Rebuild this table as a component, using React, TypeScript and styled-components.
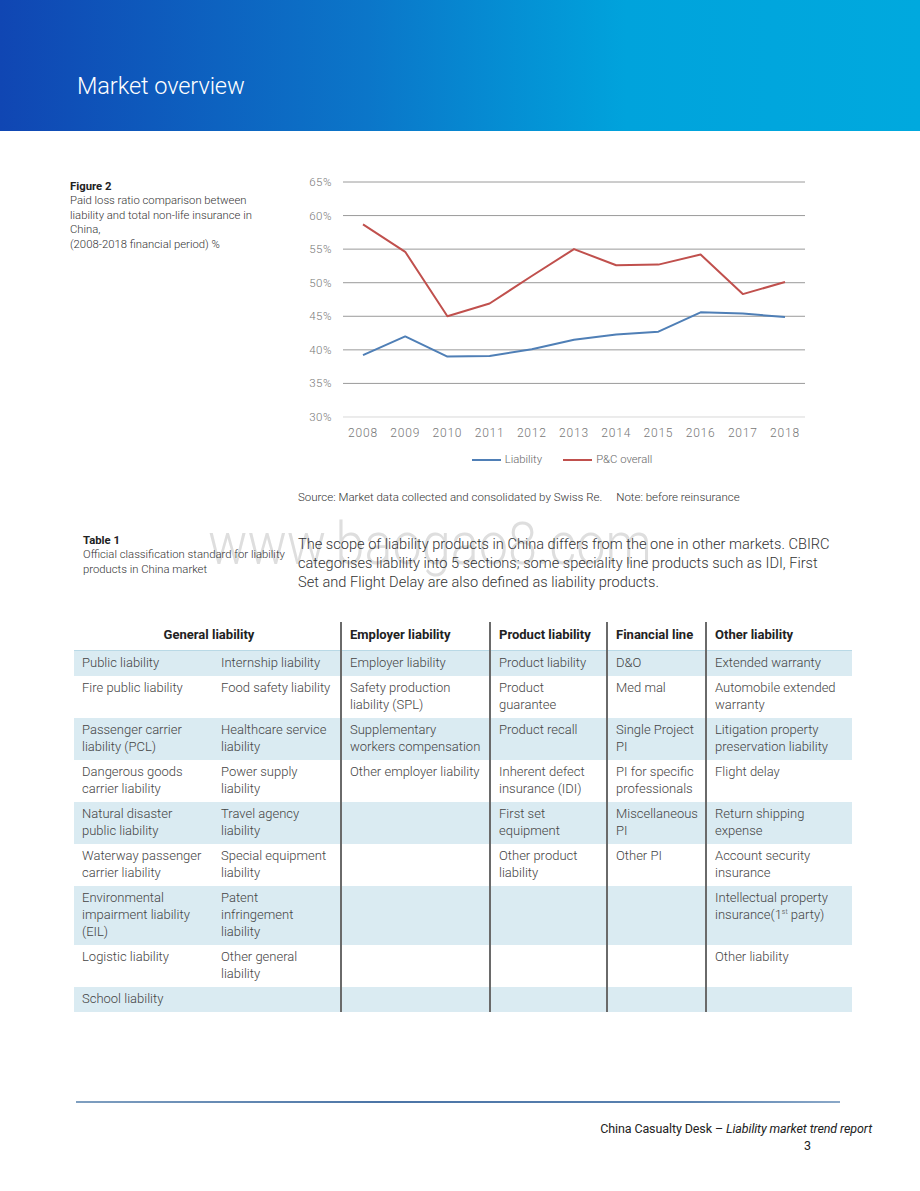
import React from "react";
import styled, { createGlobalStyle } from "styled-components";

const Global = createGlobalStyle`
  html, body { margin: 0; padding: 0; background: #fff; }
  body { font-family: Roboto, "Liberation Sans", Arial, sans-serif; color: #333; }
  * { box-sizing: border-box; }
`;

const Page = styled.div`
  position: relative;
  width: 920px;
  min-height: 1191px;
  display: flex;
  flex-direction: column;
`;

const Header = styled.header`
  height: 131px;
  background: linear-gradient(90deg, #1046b3 0%, #0b76c9 40%, #00a3dc 68%, #00a9de 100%);
  display: flex;
  align-items: flex-end;
  padding: 0 0 31px 77px;
`;

const Title = styled.h1`
  margin: 0;
  font-family: Roboto, "Liberation Sans", sans-serif;
  font-weight: 300;
  font-size: 23.6px;
  color: #fff;
  letter-spacing: -0.1px;
`;

const FigureSection = styled.section`
  display: flex;
  padding: 49px 0 0 70px;
`;

const Caption = styled.div<{ $w: number }>`
  width: ${(p) => p.$w}px;
  flex: none;
  font-size: 11.3px;
  line-height: 14.4px;
  color: #333;
  font-weight: 300;
`;

const CaptionTitle = styled.div`
  font-weight: 700;
  font-size: 11.3px;
  color: #222;
`;

const ChartCol = styled.div`
  width: 530px;
  display: flex;
  flex-direction: column;
  margin-top: -9px;
`;

const Legend = styled.div`
  display: flex;
  justify-content: center;
  gap: 21px;
  padding-left: 14px;
  margin-top: 10px;
  font-size: 11.3px;
  color: #666;
  font-weight: 300;
`;

const LegendItem = styled.div`
  display: flex;
  align-items: center;
  gap: 4px;
`;

const Swatch = styled.span<{ $c: string }>`
  width: 29px;
  height: 2px;
  background: ${(p) => p.$c};
`;

const Source = styled.div`
  margin-top: 24px;
  padding-left: 8px;
  font-size: 11.5px;
  font-weight: 300;
  color: #333;
`;

const NoteGap = styled.span`
  display: inline-block;
  width: 14px;
`;

const TableIntro = styled.section`
  position: relative;
  display: flex;
  padding: 24px 0 0 83px;
`;

const Watermark = styled.div`
  position: absolute;
  left: 208px;
  top: 4px;
  font-size: 60px;
  font-weight: 300;
  color: #dedede;
  white-space: nowrap;
  transform: scaleX(0.87);
  transform-origin: left center;
  pointer-events: none;
  z-index: 0;
`;

const IntroCaption = styled(Caption)`
  position: relative;
  z-index: 1;
  margin-top: 6px;
`;

const Para = styled.p`
  position: relative;
  z-index: 1;
  margin: 7px 0 0 0;
  width: 533px;
  font-size: 14.6px;
  line-height: 19px;
  font-weight: 300;
  color: #333;
`;

const TableWrap = styled.div`
  padding: 30px 0 0 74px;
`;

const Table = styled.table`
  border-collapse: collapse;
  width: 778px;
  table-layout: fixed;
  font-size: 13px;
  font-weight: 300;
  color: #444;
`;

const Th = styled.th<{ $sep?: boolean; $center?: boolean }>`
  font-weight: 700;
  font-size: 13px;
  color: #222;
  text-align: ${(p) => (p.$center ? "center" : "left")};
  padding: 4px 4px 6px 8px;
  height: 28px;
  white-space: nowrap;
  border-left: ${(p) => (p.$sep ? "2px solid #6a6a6a" : "none")};
  border-bottom: 1px solid #b9d9e6;
`;

const Tr = styled.tr<{ $band: boolean }>`
  background: ${(p) => (p.$band ? "#daebf2" : "#fff")};
`;

const Td = styled.td<{ $sep?: boolean }>`
  vertical-align: top;
  padding: 3px 4px 5px 8px;
  line-height: 17px;
  white-space: pre;
  border-left: ${(p) => (p.$sep ? "2px solid #6a6a6a" : "none")};
`;

const Sup = styled.sup`
  font-size: 7px;
  vertical-align: 5px;
  line-height: 0;
`;

const Footer = styled.footer`
  margin-top: auto;
  padding: 0 0 37px 0;
  display: flex;
  flex-direction: column;
`;

const FootLine = styled.div`
  margin-left: 76px;
  width: 764px;
  height: 2px;
  background: linear-gradient(90deg, #7f9fc0, #4b74a6 40%, #5a82b0 80%, #8aa8c8);
`;

const FootText = styled.div`
  align-self: flex-end;
  margin-right: 48px;
  margin-top: 17px;
  font-size: 12.5px;
  color: #222;
  font-weight: 400;
  text-align: right;
  line-height: 17px;
  letter-spacing: -0.1px;
`;

const PageNum = styled.div`
  padding-right: 61px;
`;

const years = [2008, 2009, 2010, 2011, 2012, 2013, 2014, 2015, 2016, 2017, 2018];
const pc = [58.7, 54.6, 45.0, 46.9, 51.0, 55.0, 52.6, 52.7, 54.2, 48.3, 50.1];
const liab = [39.2, 42.0, 39.0, 39.1, 40.1, 41.5, 42.3, 42.7, 45.6, 45.4, 44.9];

const yOf = (v: number) => 11 + (65 - v) * 6.714;
const xOf = (i: number) => 73 + i * 42.2;

const Chart: React.FC = () => {
  const ticks = [65, 60, 55, 50, 45, 40, 35, 30];
  const pts = (d: number[]) => d.map((v, i) => `${xOf(i).toFixed(1)},${yOf(v).toFixed(1)}`).join(" ");
  return (
    <svg width={530} height={272} viewBox="0 0 530 272">
      {ticks.map((t) => (
        <g key={t}>
          <line x1={53} x2={515} y1={yOf(t)} y2={yOf(t)} stroke={t === 30 ? "#d9d9d9" : "#9a9a9a"} strokeWidth={1} />
          <text x={42} y={yOf(t) + 4} textAnchor="end" fontSize={11.5} fill="#777" fontFamily="Roboto, sans-serif" fontWeight={300} letterSpacing={0.5}>
            {t}%
          </text>
        </g>
      ))}
      {years.map((y, i) => (
        <text key={y} x={xOf(i)} y={266} textAnchor="middle" fontSize={12} fill="#777" fontFamily="Roboto, sans-serif" fontWeight={300} letterSpacing={0.8}>
          {y}
        </text>
      ))}
      <polyline points={pts(pc)} fill="none" stroke="#c0504d" strokeWidth={2} strokeLinejoin="round" />
      <polyline points={pts(liab)} fill="none" stroke="#4f7fb6" strokeWidth={2} strokeLinejoin="round" />
    </svg>
  );
};

type Cell = React.ReactNode;
const rows: Cell[][] = [
  ["Public liability", "Internship liability", "Employer liability", "Product liability", "D&O", "Extended warranty"],
  ["Fire public liability", "Food safety liability", "Safety production\nliability (SPL)", "Product\nguarantee", "Med mal", "Automobile extended\nwarranty"],
  ["Passenger carrier\nliability (PCL)", "Healthcare service\nliability", "Supplementary\nworkers compensation", "Product recall", "Single Project\nPI", "Litigation property\npreservation liability"],
  ["Dangerous goods\ncarrier liability", "Power supply\nliability", "Other employer liability", "Inherent defect\ninsurance (IDI)", "PI for specific\nprofessionals", "Flight delay"],
  ["Natural disaster\npublic liability", "Travel agency\nliability", "", "First set\nequipment", "Miscellaneous\nPI", "Return shipping\nexpense"],
  ["Waterway passenger\ncarrier liability", "Special equipment\nliability", "", "Other product\nliability", "Other PI", "Account security\ninsurance"],
  [
    "Environmental\nimpairment liability\n(EIL)",
    "Patent\ninfringement\nliability",
    "",
    "",
    "",
    <>
      {"Intellectual property\ninsurance(1"}
      <Sup>st</Sup>
      {" party)"}
    </>,
  ],
  ["Logistic liability", "Other general\nliability", "", "", "", "Other liability"],
  ["School liability", "", "", "", "", ""],
];

const widths = [139, 128, 149, 117, 99, 146];

export default function App() {
  return (
    <Page>
      <Global />
      <Header>
        <Title>Market overview</Title>
      </Header>

      <FigureSection>
        <Caption $w={220}>
          <CaptionTitle>Figure 2</CaptionTitle>
          Paid loss ratio comparison between
          <br />
          liability and total non-life insurance in
          <br />
          China,
          <br />
          (2008-2018 financial period) %
        </Caption>
        <ChartCol>
          <Chart />
          <Legend>
            <LegendItem>
              <Swatch $c="#4f7fb6" />
              Liability
            </LegendItem>
            <LegendItem>
              <Swatch $c="#c0504d" />
              P&amp;C overall
            </LegendItem>
          </Legend>
          <Source>
            Source: Market data collected and consolidated by Swiss Re.<NoteGap />Note: before reinsurance
          </Source>
        </ChartCol>
      </FigureSection>

      <TableIntro>
        <Watermark>www.baogao8.com</Watermark>
        <IntroCaption $w={215}>
          <CaptionTitle>Table 1</CaptionTitle>
          Official classification standard for liability
          <br />
          products in China market
        </IntroCaption>
        <Para>
          The scope of liability products in China differs from the one in other markets. CBIRC categorises liability into 5 sections; some speciality line products such as IDI, First Set and Flight Delay are also defined as liability products.
        </Para>
      </TableIntro>

      <TableWrap>
        <Table>
          <colgroup>
            {widths.map((w, i) => (
              <col key={i} style={{ width: w }} />
            ))}
          </colgroup>
          <thead>
            <tr>
              <Th colSpan={2} $center>
                General liability
              </Th>
              <Th $sep>Employer liability</Th>
              <Th $sep>Product liability</Th>
              <Th $sep>Financial line</Th>
              <Th $sep>Other liability</Th>
            </tr>
          </thead>
          <tbody>
            {rows.map((r, ri) => (
              <Tr key={ri} $band={ri % 2 === 0}>
                {r.map((c, ci) => (
                  <Td key={ci} $sep={ci >= 2}>
                    {c}
                  </Td>
                ))}
              </Tr>
            ))}
          </tbody>
        </Table>
      </TableWrap>

      <Footer>
        <FootLine />
        <FootText>
          China Casualty Desk – <i>Liability market trend report</i>
          <PageNum>3</PageNum>
        </FootText>
      </Footer>
    </Page>
  );
}
